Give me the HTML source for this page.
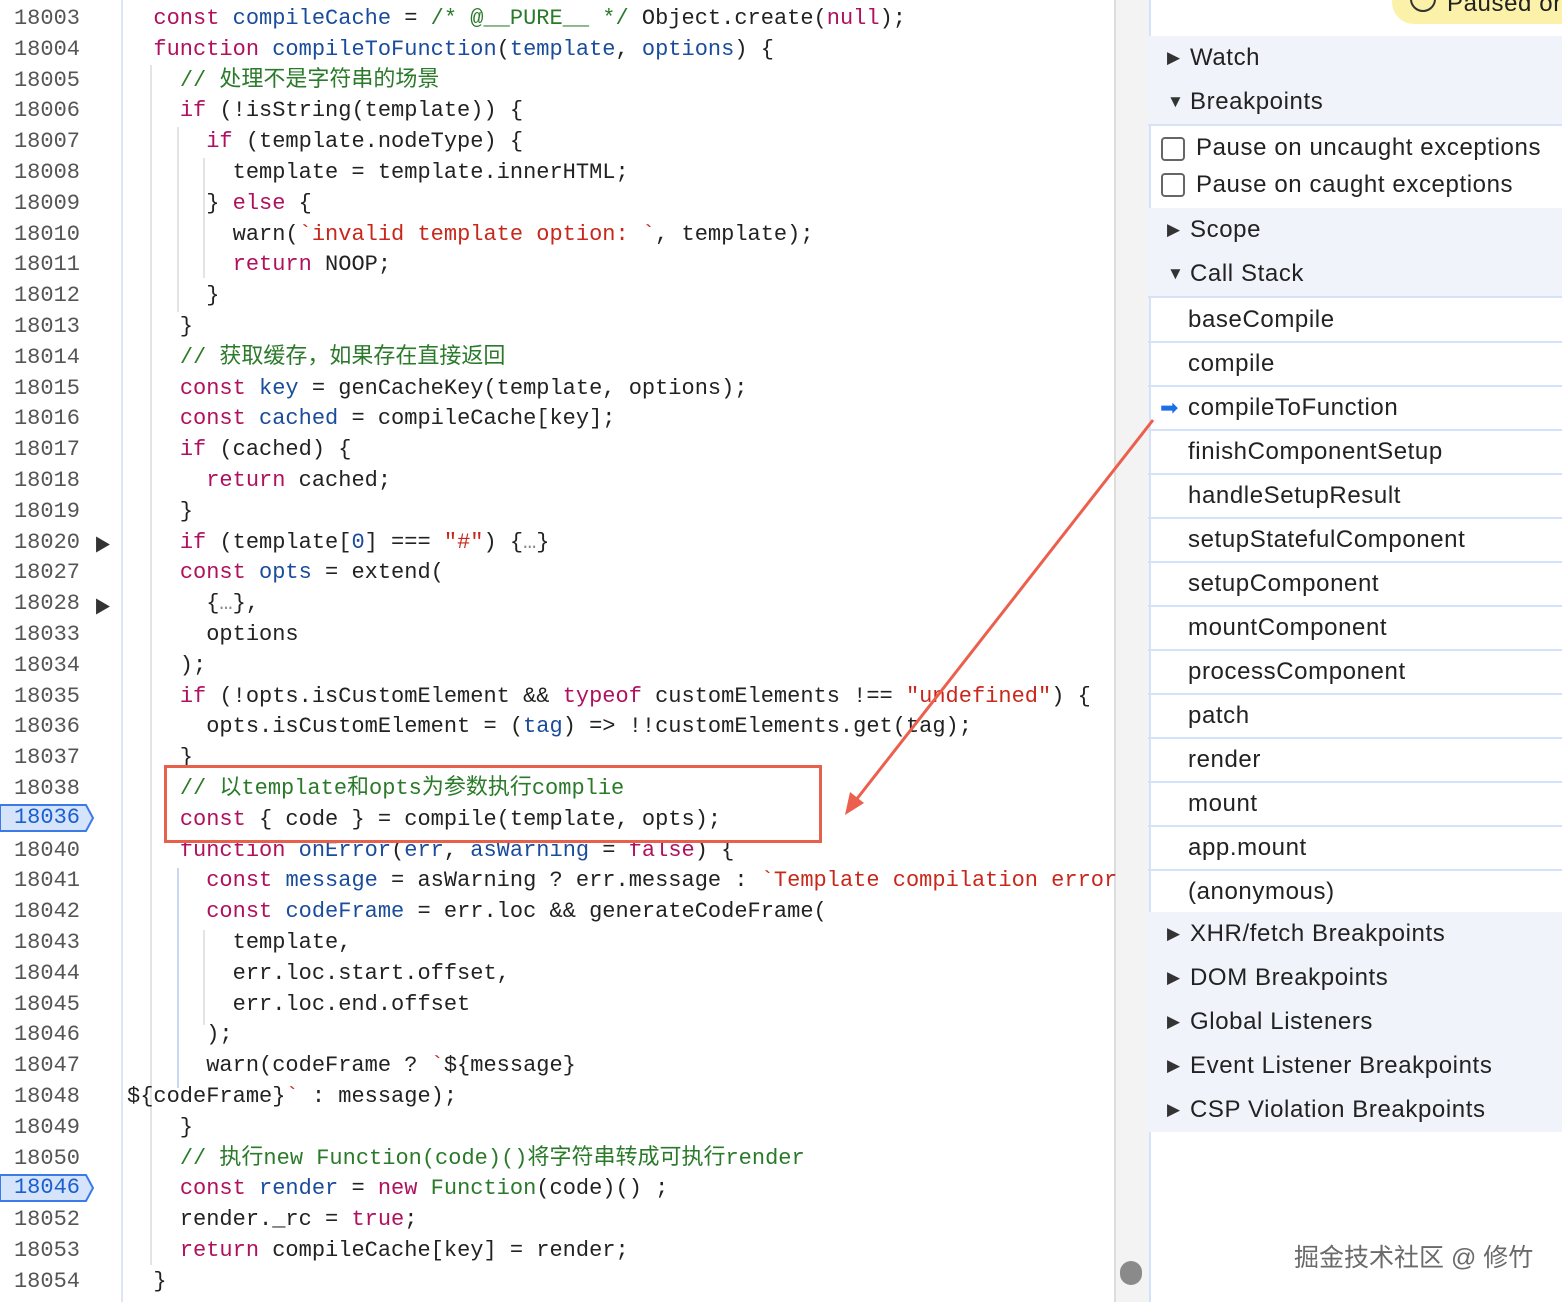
<!DOCTYPE html>
<html><head><meta charset="utf-8"><style>
body{margin:0;width:1562px;height:1302px;overflow:hidden;background:#fff;position:relative;font-family:"Liberation Mono","Noto Sans CJK SC",monospace}
.ln{position:absolute;left:0;width:80px;text-align:right;font-size:22px;color:#555;line-height:30.8px;margin-top:2px}
.cl{position:absolute;left:127px;font-size:22px;line-height:30.8px;color:#222;white-space:pre;margin-top:2px}
.k{color:#b0115e}.v{color:#1a4c9c}.c{color:#2a7a2a}.s{color:#c8281c}
.side{position:absolute;left:1148px;right:0;font-family:"Liberation Sans",sans-serif;font-size:24px;letter-spacing:0.6px;color:#222;white-space:nowrap}
.hd{position:absolute;left:1148px;right:0;height:44px;background:#f1f3fa;font-family:"Liberation Sans",sans-serif;font-size:24px;letter-spacing:0.6px;color:#222;line-height:44px}
.hd span{position:absolute;left:42px}
.tri{position:absolute;left:19px;top:0;font-size:17px;color:#333}
.it{position:absolute;left:1148px;right:0;height:43px;border-bottom:2px solid #d6e2f8;font-family:"Liberation Sans",sans-serif;font-size:24px;letter-spacing:0.6px;line-height:44px;color:#222}
.it span{position:absolute;left:40px}
.cb{position:absolute;left:1161px;width:20px;height:20px;border:2px solid #666;border-radius:4px}
.bpt{position:absolute;left:0;width:80px;text-align:right;font-size:22px;line-height:28px;color:#1a5fd0}
.g{position:absolute;width:2px;background:#e4e4e4}
</style></head><body>
<div style="position:absolute;left:121px;top:0;width:2px;height:1302px;background:#dde6f3"></div>
<div style="position:absolute;left:1114px;top:0;width:33px;height:1302px;background:#f3f3f3;border-left:2px solid #ddd;border-right:2px solid #d6e2f8"></div>
<div style="position:absolute;left:1120px;top:1261px;width:22px;height:24px;border-radius:11px;background:#8a8a8a"></div>
<div class="g" style="left:150px;top:65px;height:1200px"></div>
<div class="g" style="left:177px;top:127px;height:185px"></div>
<div class="g" style="left:203px;top:158px;height:120px"></div>
<div class="g" style="left:177px;top:868px;height:220px;background:#c9d7f0"></div>
<div class="g" style="left:203px;top:930px;height:95px"></div>

<svg style="position:absolute;left:0;top:0" width="100" height="1302">
<polygon points="0,805 86,805 93,818 86,831 0,831" fill="#d5e3fb" stroke="#3b7be8" stroke-width="2"/>
<polygon points="0,1175 86,1175 93,1188 86,1201 0,1201" fill="#d5e3fb" stroke="#3b7be8" stroke-width="2"/>
</svg>

<div class="ln" style="top:2px">18003</div><div class="ln" style="top:32.8px">18004</div><div class="ln" style="top:63.6px">18005</div><div class="ln" style="top:94.4px">18006</div><div class="ln" style="top:125.2px">18007</div><div class="ln" style="top:156px">18008</div><div class="ln" style="top:186.8px">18009</div><div class="ln" style="top:217.6px">18010</div><div class="ln" style="top:248.4px">18011</div><div class="ln" style="top:279.2px">18012</div><div class="ln" style="top:310px">18013</div><div class="ln" style="top:340.8px">18014</div><div class="ln" style="top:371.6px">18015</div><div class="ln" style="top:402.4px">18016</div><div class="ln" style="top:433.2px">18017</div><div class="ln" style="top:464px">18018</div><div class="ln" style="top:494.8px">18019</div><div class="ln" style="top:525.6px">18020</div><div class="ln" style="top:556.4px">18027</div><div class="ln" style="top:587.2px">18028</div><div class="ln" style="top:618px">18033</div><div class="ln" style="top:648.8px">18034</div><div class="ln" style="top:679.6px">18035</div><div class="ln" style="top:710.4px">18036</div><div class="ln" style="top:741.2px">18037</div><div class="ln" style="top:772px">18038</div>
<div class="bpt" style="top:804px">18036</div>
<div class="ln" style="top:833.6px">18040</div><div class="ln" style="top:864.4px">18041</div><div class="ln" style="top:895.2px">18042</div><div class="ln" style="top:926px">18043</div><div class="ln" style="top:956.8px">18044</div><div class="ln" style="top:987.6px">18045</div><div class="ln" style="top:1018.4px">18046</div><div class="ln" style="top:1049.2px">18047</div><div class="ln" style="top:1080px">18048</div><div class="ln" style="top:1110.8px">18049</div><div class="ln" style="top:1141.6px">18050</div>
<div class="bpt" style="top:1174px">18046</div>
<div class="ln" style="top:1203.2px">18052</div><div class="ln" style="top:1234px">18053</div><div class="ln" style="top:1264.8px">18054</div>
<div style="position:absolute;left:94px;top:531px;font-size:17px;color:#333">▶</div>
<div style="position:absolute;left:94px;top:593px;font-size:17px;color:#333">▶</div>

<div class="cl" style="top:2px">  <span class="k">const</span> <span class="v">compileCache</span> = <span class="c">/* @__PURE__ */</span> Object.create(<span class="k">null</span>);</div>
<div class="cl" style="top:32.8px">  <span class="k">function</span> <span class="v">compileToFunction</span>(<span class="v">template</span>, <span class="v">options</span>) {</div>
<div class="cl" style="top:63.6px">    <span class="c">// 处理不是字符串的场景</span></div>
<div class="cl" style="top:94.4px">    <span class="k">if</span> (!isString(template)) {</div>
<div class="cl" style="top:125.2px">      <span class="k">if</span> (template.nodeType) {</div>
<div class="cl" style="top:156px">        template = template.innerHTML;</div>
<div class="cl" style="top:186.8px">      } <span class="k">else</span> {</div>
<div class="cl" style="top:217.6px">        warn(<span class="s">`invalid template option: `</span>, template);</div>
<div class="cl" style="top:248.4px">        <span class="k">return</span> NOOP;</div>
<div class="cl" style="top:279.2px">      }</div>
<div class="cl" style="top:310px">    }</div>
<div class="cl" style="top:340.8px">    <span class="c">// 获取缓存，如果存在直接返回</span></div>
<div class="cl" style="top:371.6px">    <span class="k">const</span> <span class="v">key</span> = genCacheKey(template, options);</div>
<div class="cl" style="top:402.4px">    <span class="k">const</span> <span class="v">cached</span> = compileCache[key];</div>
<div class="cl" style="top:433.2px">    <span class="k">if</span> (cached) {</div>
<div class="cl" style="top:464px">      <span class="k">return</span> cached;</div>
<div class="cl" style="top:494.8px">    }</div>
<div class="cl" style="top:525.6px">    <span class="k">if</span> (template[<span class="v">0</span>] === <span class="s">"#"</span>) {<span style="color:#888">…</span>}</div>
<div class="cl" style="top:556.4px">    <span class="k">const</span> <span class="v">opts</span> = extend(</div>
<div class="cl" style="top:587.2px">      {<span style="color:#888">…</span>},</div>
<div class="cl" style="top:618px">      options</div>
<div class="cl" style="top:648.8px">    );</div>
<div class="cl" style="top:679.6px">    <span class="k">if</span> (!opts.isCustomElement &amp;&amp; <span class="k">typeof</span> customElements !== <span class="s">"undefined"</span>) {</div>
<div class="cl" style="top:710.4px">      opts.isCustomElement = (<span class="v">tag</span>) =&gt; !!customElements.get(tag);</div>
<div class="cl" style="top:741.2px">    }</div>
<div class="cl" style="top:772px">    <span class="c">// 以template和opts为参数执行complie</span></div>
<div class="cl" style="top:802.8px">    <span class="k">const</span> { code } = compile(template, opts);</div>
<div class="cl" style="top:833.6px">    <span class="k">function</span> <span class="v">onError</span>(<span class="v">err</span>, <span class="v">asWarning</span> = <span class="k">false</span>) {</div>
<div class="cl" style="top:864.4px">      <span class="k">const</span> <span class="v">message</span> = asWarning ? err.message : <span class="s">`Template compilation error</span></div>
<div class="cl" style="top:895.2px">      <span class="k">const</span> <span class="v">codeFrame</span> = err.loc &amp;&amp; generateCodeFrame(</div>
<div class="cl" style="top:926px">        template,</div>
<div class="cl" style="top:956.8px">        err.loc.start.offset,</div>
<div class="cl" style="top:987.6px">        err.loc.end.offset</div>
<div class="cl" style="top:1018.4px">      );</div>
<div class="cl" style="top:1049.2px">      warn(codeFrame ? <span class="s">`</span>${message}</div>
<div class="cl" style="top:1080px">${codeFrame}<span class="s">`</span> : message);</div>
<div class="cl" style="top:1110.8px">    }</div>
<div class="cl" style="top:1141.6px">    <span class="c">// 执行new Function(code)()将字符串转成可执行render</span></div>
<div class="cl" style="top:1172.4px">    <span class="k">const</span> <span class="v">render</span> = <span class="k">new</span> <span class="c">Function</span>(code)() ;</div>
<div class="cl" style="top:1203.2px">    render._rc = <span class="k">true</span>;</div>
<div class="cl" style="top:1234px">    <span class="k">return</span> compileCache[key] = render;</div>
<div class="cl" style="top:1264.8px">  }</div>

<div style="position:absolute;left:164px;top:765px;width:652px;height:72px;border:3px solid #e8604c"></div>
<svg style="position:absolute;left:0;top:0" width="1562" height="1302"><line x1="1153" y1="420" x2="856" y2="800" stroke="#ec5f4c" stroke-width="3"/><polygon points="845,815 850,792 864,803" fill="#ec5f4c"/></svg>

<div style="position:absolute;left:1392px;top:-20px;width:200px;height:44px;border-radius:22px;background:#fbf1a8"></div>
<div style="position:absolute;left:1410px;top:-14px;width:22px;height:22px;border:2px solid #333;border-radius:50%"></div>
<div style="position:absolute;left:1447px;top:-10px;font-family:'Liberation Sans',sans-serif;font-size:24px;letter-spacing:0.6px;color:#222;white-space:nowrap">Paused on</div>

<div class="hd" style="top:36px"><div class="tri">▶</div><span>Watch</span></div>
<div class="hd" style="top:80px;border-bottom:2px solid #d6e2f8"><div class="tri">▼</div><span>Breakpoints</span></div>
<div class="cb" style="top:137px"></div><div class="side" style="top:134px;left:1196px">Pause on uncaught exceptions</div>
<div class="cb" style="top:173px"></div><div class="side" style="top:171px;left:1196px">Pause on caught exceptions</div>
<div class="hd" style="top:208px"><div class="tri">▶</div><span>Scope</span></div>
<div class="hd" style="top:252px;border-bottom:2px solid #d6e2f8"><div class="tri">▼</div><span>Call Stack</span></div>
<div class="it" style="top:298px"><span>baseCompile</span></div>
<div class="it" style="top:342px"><span>compile</span></div>
<div class="it" style="top:386px"><span>compileToFunction</span><div style="position:absolute;left:12px;top:0;color:#1a6ee8;font-size:22px">➡</div></div>
<div class="it" style="top:430px"><span>finishComponentSetup</span></div>
<div class="it" style="top:474px"><span>handleSetupResult</span></div>
<div class="it" style="top:518px"><span>setupStatefulComponent</span></div>
<div class="it" style="top:562px"><span>setupComponent</span></div>
<div class="it" style="top:606px"><span>mountComponent</span></div>
<div class="it" style="top:650px"><span>processComponent</span></div>
<div class="it" style="top:694px"><span>patch</span></div>
<div class="it" style="top:738px"><span>render</span></div>
<div class="it" style="top:782px"><span>mount</span></div>
<div class="it" style="top:826px"><span>app.mount</span></div>
<div class="it" style="top:870px;border-bottom:none"><span>(anonymous)</span></div>
<div class="hd" style="top:912px"><div class="tri">▶</div><span>XHR/fetch Breakpoints</span></div>
<div class="hd" style="top:956px"><div class="tri">▶</div><span>DOM Breakpoints</span></div>
<div class="hd" style="top:1000px"><div class="tri">▶</div><span>Global Listeners</span></div>
<div class="hd" style="top:1044px"><div class="tri">▶</div><span>Event Listener Breakpoints</span></div>
<div class="hd" style="top:1088px"><div class="tri">▶</div><span>CSP Violation Breakpoints</span></div>
<div style="position:absolute;left:1294px;top:1238px;font-family:'Liberation Sans','Noto Sans CJK SC',sans-serif;font-size:25px;color:#6a6a6a;text-shadow:0 0 2px #fff,0 0 2px #fff">掘金技术社区 @ 修竹</div>
</body></html>
